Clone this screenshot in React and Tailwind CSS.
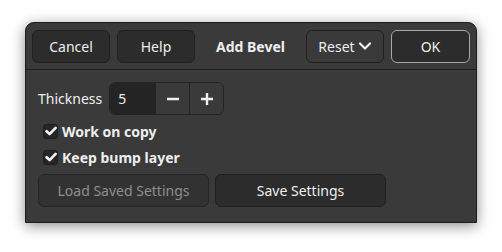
import React from 'react';

const font = { fontFamily: '"Noto Sans", "DejaVu Sans", sans-serif' };

const Check = () => (
  <span className="flex h-[15px] w-[15px] items-center justify-center rounded-[3px] bg-[#262626] border border-[#1e1e1e]">
    <svg width="12" height="12" viewBox="0 0 12 12" fill="none">
      <path d="M1.6 6.2 L4.6 9.1 L10.6 2.9" stroke="#f2f2f2" strokeWidth="2.7" strokeLinecap="round" strokeLinejoin="round" />
    </svg>
  </span>
);

const App = () => {
  return (
    <div className="h-[252px] w-[502px] bg-white pt-[22px] pl-[25px]" style={font}>
      <div className="flex h-[201px] w-[452px] flex-col overflow-hidden rounded-t-[9px] border border-[#1c1c1c] bg-[#3a3a3a] text-[14px] text-[#eeeeee] shadow-[0_3px_14px_rgba(0,0,0,0.45)]">
        {/* header bar */}
        <div className="flex h-[47px] shrink-0 items-center border-b border-[#202020] px-[6px]">
          <div className="flex gap-[7px]">
            <button className="h-[33px] w-[78px] rounded-[6px] border border-[#202020] bg-[#2c2c2c]">Cancel</button>
            <button className="h-[33px] w-[78px] rounded-[6px] border border-[#202020] bg-[#2c2c2c]">Help</button>
          </div>
          <div className="flex-1 text-center font-bold">Add Bevel</div>
          <div className="flex gap-[7px]">
            <button className="flex h-[33px] w-[78px] items-center justify-center gap-[3px] rounded-[6px] border border-[#202020] bg-[#3a3a3a]">
              Reset
              <svg width="14" height="14" viewBox="0 0 14 14" fill="none">
                <path d="M2 4.5 L7 9.5 L12 4.5" stroke="#eeeeee" strokeWidth="2.2" strokeLinecap="round" strokeLinejoin="round" />
              </svg>
            </button>
            <button className="h-[33px] w-[79px] rounded-[6px] border border-[#a8a8a8] bg-[#2c2c2c]">OK</button>
          </div>
        </div>

        {/* body */}
        <div className="flex flex-col pl-[12px] pt-[12px]">
          <div className="flex items-center gap-[7px]">
            <span>Thickness</span>
            <div className="flex h-[33px] overflow-hidden rounded-[6px] border border-[#242424]">
              <div className="flex w-[45px] items-center bg-[#242424] pl-[8px]">5</div>
              <button className="flex w-[34px] items-center justify-center border-l border-[#242424]">
                <svg width="14" height="14" viewBox="0 0 14 14">
                  <path d="M1 7 H13" stroke="#eeeeee" strokeWidth="2.4" />
                </svg>
              </button>
              <button className="flex w-[34px] items-center justify-center border-l border-[#242424]">
                <svg width="14" height="14" viewBox="0 0 14 14">
                  <path d="M1 7 H13 M7 1 V13" stroke="#eeeeee" strokeWidth="2.4" />
                </svg>
              </button>
            </div>
          </div>

          <label className="mt-[3px] flex h-[26px] items-center gap-[4px] pl-[5px] font-bold">
            <Check />
            Work on copy
          </label>
          <label className="flex h-[26px] items-center gap-[4px] pl-[5px] font-bold">
            <Check />
            Keep bump layer
          </label>

          <div className="mt-[4px] flex gap-[6px]">
            <button className="h-[33px] w-[171px] rounded-[6px] border border-[#242424] bg-[#323232] text-[#8e8e8e]">
              Load Saved Settings
            </button>
            <button className="h-[33px] w-[171px] rounded-[6px] border border-[#202020] bg-[#2c2c2c]">
              Save Settings
            </button>
          </div>
        </div>
      </div>
    </div>
  );
};

export default App;
